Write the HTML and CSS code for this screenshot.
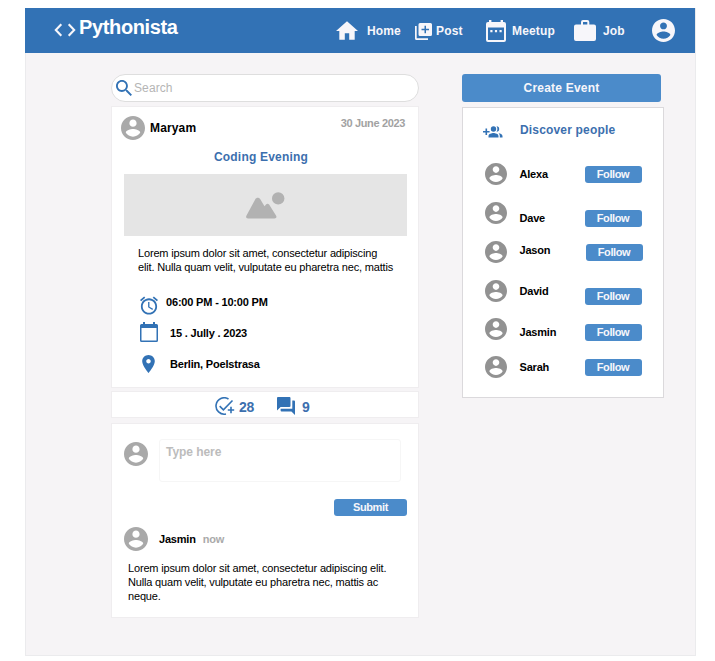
FILE: index.html
```html
<!DOCTYPE html>
<html lang="en">
<head>
<meta charset="utf-8">
<title>Pythonista</title>
<link rel="stylesheet" href="styles.css">
</head>
<body>
<svg class="defs" width="0" height="0">
  <symbol id="user" viewBox="2 2 20 20"><path d="M12 2C6.48 2 2 6.48 2 12s4.48 10 10 10 10-4.48 10-10S17.52 2 12 2zm0 3c1.66 0 3 1.34 3 3s-1.34 3-3 3-3-1.34-3-3 1.34-3 3-3zm0 14.2c-2.5 0-4.71-1.28-6-3.22.03-1.99 4-3.08 6-3.08 1.99 0 5.97 1.09 6 3.08-1.29 1.94-3.5 3.22-6 3.22z"/></symbol>
</svg>
<div class="app">
  <header class="topbar">
    <svg class="brand-icon" viewBox="0 0 22 14"><path d="M7.3 1.2 1.8 7l5.500 5.800M14.700 1.200 20.200 7l-5.500 5.800"/></svg>
    <span class="brand">Pythonista</span>
    <nav class="nav">
      <a class="nav-item home"><svg viewBox="2 3 20 17" width="22" height="19"><path d="M10 20v-6h4v6h5v-8h3L12 3 2 12h3v8z"/></svg><span>Home</span></a>
      <a class="nav-item post"><svg viewBox="0 0 17 17" width="17" height="17"><path fill-rule="evenodd" d="M5 0h10.500a1.500 1.500 0 0 1 1.500 1.500v10a1.500 1.500 0 0 1-1.500 1.500H5a1.500 1.500 0 0 1-1.500-1.500v-10A1.500 1.500 0 0 1 5 0zm4.500 2.700v3H6.500v1.500h3v3H11v-3h3V5.700h-3v-3z"/><path d="M0 3h1.700v12.300H13V17H1.500A1.500 1.500 0 0 1 0 15.500z"/></svg><span>Post</span></a>
      <a class="nav-item meetup"><svg viewBox="0 0 20 22" width="20" height="22"><path fill-rule="evenodd" d="M3 0h2.400v2h9.200V0H17v2h1a2 2 0 0 1 2 2v16a2 2 0 0 1-2 2H2a2 2 0 0 1-2-2V4a2 2 0 0 1 2-2h1zM2 7.500V20h16V7.500z"/><path d="M4.300 10h2.200v2.200H4.300zm4.600 0h2.200v2.200H8.900zm4.600 0h2.200v2.200h-2.200z"/></svg><span>Meetup</span></a>
      <a class="nav-item job"><svg viewBox="0 0 22 22" width="22" height="22"><path fill-rule="evenodd" d="M9 0h4.300a2 2 0 0 1 2 2v2.500H20a2 2 0 0 1 2 2V19a2 2 0 0 1-2 2H2a2 2 0 0 1-2-2V6.500a2 2 0 0 1 2-2h5V2a2 2 0 0 1 2-2zm0 2v2.500h4.300V2z"/></svg><span>Job</span></a>
      <a class="nav-item account"><svg width="23" height="23"><use href="#user"/></svg></a>
    </nav>
  </header>
  <main class="content">
    <section class="feed">
      <label class="search"><svg viewBox="3 3 17.500 17.500" width="15" height="15"><path d="M15.500 14h-.79l-.28-.27C15.410 12.590 16 11.110 16 9.500 16 5.910 13.090 3 9.500 3S3 5.910 3 9.500 5.910 16 9.500 16c1.610 0 3.090-.59 4.230-1.570l.27.28v.79l5 4.990L20.490 19l-4.990-5zm-6 0C7.010 14 5 11.990 5 9.500S7.010 5 9.500 5 14 7.010 14 9.500 11.990 14 9.500 14z"/></svg><span>Search</span></label>
      <article class="card event">
        <div class="event-head">
          <svg class="avatar"><use href="#user"/></svg>
          <span class="author">Maryam</span>
          <time class="date">30 June 2023</time>
        </div>
        <h2 class="event-title">Coding Evening</h2>
        <div class="photo"><svg viewBox="0 0 39 27" width="39" height="27"><path d="M2 26.500c-1.700 0-2.400-1.600-1.500-3L9.300 7.200c1.100-2 3.800-2 5 0l4.200 7 1.500-1.800c1-1 2.200-1 3.100.2L30 23.500c1 1.500.2 3-1.500 3z"/><circle cx="32.200" cy="6.400" r="6.200"/></svg></div>
        <p class="body-text event-text">Lorem ipsum dolor sit amet, consectetur adipiscing<br>elit. Nulla quam velit, vulputate eu pharetra nec, mattis</p>
        <ul class="details">
          <li class="time"><svg viewBox="2 3 20 19" width="18" height="18"><path d="M22 5.720l-4.600-3.860-1.290 1.530 4.600 3.860L22 5.720zM7.880 3.390L6.600 1.860 2 5.710l1.290 1.530 4.590-3.850zM12.500 8H11v6l4.750 2.850.75-1.230-4-2.370V8zM12 4c-4.970 0-9 4.030-9 9s4.020 9 9 9c4.970 0 9-4.030 9-9s-4.030-9-9-9zm0 16c-3.870 0-7-3.130-7-7s3.130-7 7-7 7 3.130 7 7-3.130 7-7 7z"/></svg><span>06:00 PM - 10:00 PM</span></li>
          <li class="day"><svg viewBox="0 0 18 20" width="18" height="20"><path fill-rule="evenodd" d="M3 0h2v2h8V0h2v2h1.500A1.500 1.500 0 0 1 18 3.500v15a1.500 1.500 0 0 1-1.500 1.500h-15A1.500 1.500 0 0 1 0 18.500v-15A1.500 1.500 0 0 1 1.500 2H3zM1.500 6v12.500h15V6z"/></svg><span>15 . Jully . 2023</span></li>
          <li class="place"><svg viewBox="5 2 14 20" width="13" height="18"><path d="M12 2C8.130 2 5 5.130 5 9c0 5.250 7 13 7 13s7-7.750 7-13c0-3.870-3.130-7-7-7zm0 9.500c-1.380 0-2.500-1.120-2.500-2.500s1.120-2.500 2.500-2.500 2.500 1.120 2.500 2.500-1.120 2.500-2.500 2.500z"/></svg><span>Berlin, Poelstrasa</span></li>
        </ul>
      </article>
      <div class="card stats">
        <svg viewBox="0 0 20 19" width="20" height="19"><g fill="none" stroke="#3272b5" stroke-width="1.600"><path d="M13.500 2A8.200 8.200 0 1 0 11 17M4.700 9.100l3.700 3.700L17.500 3.500M12.800 13h6.400M16 9.800v6.400"/></g></svg>
        <span class="going">28</span>
        <svg class="chat" viewBox="2 2 20 20" width="18" height="18"><path d="M21 6h-2v9H6v2c0 .55.45 1 1 1h11l4 4V7c0-.55-.45-1-1-1zm-4 6V3c0-.55-.45-1-1-1H3c-.55 0-1 .45-1 1v14l4-4h10c.55 0 1-.45 1-1z"/></svg>
        <span class="comments">9</span>
      </div>
      <section class="card thread">
        <div class="compose"><svg class="avatar"><use href="#user"/></svg><div class="entry">Type here</div></div>
        <div class="submit">Submit</div>
        <div class="comment-head"><svg class="avatar"><use href="#user"/></svg><b>Jasmin</b><span>now</span></div>
        <p class="body-text comment-text">Lorem ipsum dolor sit amet, consectetur adipiscing elit.<br>Nulla quam velit, vulputate eu pharetra nec, mattis ac<br>neque.</p>
      </section>
    </section>
    <aside class="side">
      <div class="create">Create Event</div>
      <section class="people">
        <h2 class="people-head"><svg viewBox="0 0 20 12" width="20" height="12"><path d="M2.500 2.500h1.600V5h2.500v1.500H4.100V9H2.500V6.500H0V5h2.500z"/><circle cx="10.500" cy="3" r="2.700"/><path d="M5.500 11.500V10c0-2 3.300-2.900 5-2.900s5 .9 5 2.900v1.500zM13.500.3a2.700 2.700 0 1 1 0 5.400c1.200-1.500 1.200-3.800 0-5.400zM15.500 7.300c1.800.3 4 1.100 4 2.700v1.500h-2.700V10c0-1.100-.5-2-1.300-2.700z"/></svg><span>Discover people</span></h2>
        <div class="person"><svg><use href="#user"/></svg><b>Alexa</b><span class="follow">Follow</span></div>
        <div class="person dave"><svg><use href="#user"/></svg><b>Dave</b><span class="follow">Follow</span></div>
        <div class="person jason"><svg><use href="#user"/></svg><b>Jason</b><span class="follow">Follow</span></div>
        <div class="person david"><svg><use href="#user"/></svg><b>David</b><span class="follow">Follow</span></div>
        <div class="person jasmin"><svg><use href="#user"/></svg><b>Jasmin</b><span class="follow">Follow</span></div>
        <div class="person sarah"><svg><use href="#user"/></svg><b>Sarah</b><span class="follow">Follow</span></div>
      </section>
    </aside>
  </main>
</div>
</body>
</html>
```
FILE: styles.css
```css
* { box-sizing: border-box; }
body { margin: 0; background: #fff; font-family: "Liberation Sans", Arial, sans-serif; font-size: 11px; color: #000; }
h2, p, ul { margin: 0; padding: 0; list-style: none; }
svg { display: block; flex: none; }
span, b, time { white-space: nowrap; }
.defs { position: absolute; }
.app { width: 671px; height: 648px; margin: 8px 0 0 25px; background: #f6f4f6; box-shadow: inset 0 0 0 1px #ebebed; }
.topbar { width: 670px; height: 45px; background: #3272b5; color: #f7f6fa; display: flex; align-items: flex-start; }
.brand-icon { width: 22px; height: 14px; margin: 15px 0 0 29px; fill: none; stroke: #f7f6fa; stroke-width: 2.1; }
.brand { width: 100px; margin: 7px 0 0 3px; font: bold 20px/24px "Liberation Sans", Arial, sans-serif; letter-spacing: -.36px; color: #fff; }
.nav { display: flex; align-items: center; height: 45px; fill: #f7f6fa; font-weight: bold; font-size: 12px; letter-spacing: .15px; margin-left: 157px; }
.nav-item { display: flex; align-items: center; }
.home { width: 79px; gap: 9px; }
.post { width: 71px; gap: 4px; }
.post svg { margin-top: 2px; }
.meetup { width: 88px; gap: 6px; }
.job { width: 78px; gap: 7px; }
.content { display: flex; align-items: flex-start; gap: 43px; padding: 21px 0 0 86px; }
.feed { width: 308px; }
.search { display: flex; align-items: center; height: 28px; padding-left: 4px; gap: 2px; border: 1px solid #dedede; border-radius: 14px; background: #fff; color: #b5b5b5; font-size: 12px; letter-spacing: .1px; }
.search svg { fill: #3272b5; width: 16px; height: 16px; }
.card { background: #fff; border: 1px solid #efedef; }
.event { height: 282px; margin-top: 4px; padding-top: 9px; }
.event-head { display: flex; align-items: center; height: 24px; padding: 0 13px 0 9px; }
.avatar { width: 24px; height: 24px; fill: #a9a9a9; }
.author { margin-left: 5px; font-size: 12px; font-weight: bold; letter-spacing: .15px; }
.date { margin: -10px 0 0 auto; color: #a2a2a2; font-weight: bold; font-size: 11px; letter-spacing: -.35px; }
.event-title { margin: 9px 0 0; padding-right: 8px; text-align: center; font-size: 12px; line-height: 16px; letter-spacing: .2px; color: #3c6fae; }
.photo { width: 283px; height: 62px; margin: 9px 0 0 12px; display: flex; justify-content: center; align-items: center; background: #e5e5e5; fill: #b2b2b2; }
.body-text { font-size: 11px; line-height: 14px; white-space: nowrap; letter-spacing: -.17px; }
.event-text { margin: 10px 0 0 26px; }
.details { padding: 21px 0 0 28px; fill: #3272b5; font-size: 11px; font-weight: bold; }
.details li { display: flex; align-items: flex-start; line-height: 14px; letter-spacing: -.18px; }
.time { height: 27px; gap: 8px; padding-left: 1px; }
.time svg { margin-top: 2px; overflow: visible; }
.time svg { margin-left: -1px; }
.day { height: 33px; gap: 12px; }
.day span { margin-top: 4px; }
.place { gap: 15px; padding-left: 2px; }
.place span { margin-top: 2px; }
.stats { display: flex; align-items: center; height: 27px; margin-top: 3px; padding: 4px 0 0 103px; fill: #3272b5; color: #3c6fae; font-size: 14px; font-weight: bold; letter-spacing: -.3px; }
.going { margin-left: 4px; width: 16px; }
.chat { margin: -2px 1px 0 22px; }
.comments { margin-left: 6px; }
.thread { height: 195px; margin-top: 5px; padding-top: 15px; }
.compose { display: flex; padding-left: 12px; gap: 11px; }
.compose .avatar { margin-top: 3px; }
.entry { width: 242px; height: 43px; padding: 4px 6px; border: 1px solid #f6f6f6; border-radius: 3px; color: #bcbcbc; font-weight: bold; font-size: 12px; line-height: 16px; letter-spacing: -.05px; }
.submit { width: 73px; height: 17px; margin: 17px 0 0 222px; border-radius: 3px; background: #4b8bca; color: #f7f6fa; font-weight: bold; text-align: center; line-height: 17px; letter-spacing: -.5px; }
.submit { letter-spacing: -.4px; }
.comment-head { display: flex; align-items: center; margin-top: 11px; padding-left: 12px; letter-spacing: -.2px; }
.comment-head b { margin-left: 11px; }
.comment-head span { margin: -1px 0 0 7px; color: #aaa; font-weight: bold; }
.comment-text { margin: 10px 0 0 16px; }
.side { width: 203px; }
.create { width: 199px; height: 28px; border-radius: 3px; background: #4b8bca; color: #f7f6fa; font-size: 12px; font-weight: bold; letter-spacing: .2px; line-height: 28px; text-align: center; }
.people { width: 202px; height: 291px; margin-top: 5px; padding: 14px 0 0 22px; background: #fff; border: 1px solid #dbd9dc; }
.people-head { display: flex; gap: 15px; height: 41px; font-size: 12px; line-height: 16px; letter-spacing: .17px; color: #3c6fae; fill: #3272b5; }
.people-head svg { margin: 4px 2px 0 -2px; }
.person { display: flex; align-items: flex-start; height: 39px; --name: 4px; --btn: 3px; --left: 0px; }
.person svg { width: 22px; height: 22px; margin-left: -.5px; fill: #929292; }
.person b { width: 65px; margin: var(--name) 0 0 13px; line-height: 14px; letter-spacing: -.2px; }
.follow { width: 57px; height: 17px; margin: var(--btn) 0 0 var(--left); border-radius: 3px; background: #4b8bca; color: #f7f6fa; font-weight: bold; text-align: center; line-height: 17px; letter-spacing: -.4px; }
.dave { --name: 9px; --btn: 8px; }
.jason { --name: 2px; --btn: 3px; --left: 1px; }
.david { --name: 4px; --btn: 8px; height: 38px; }
.jasmin { --name: 7px; --btn: 6px; height: 38px; }
.sarah { --name: 4px; --btn: 3px; }
```
